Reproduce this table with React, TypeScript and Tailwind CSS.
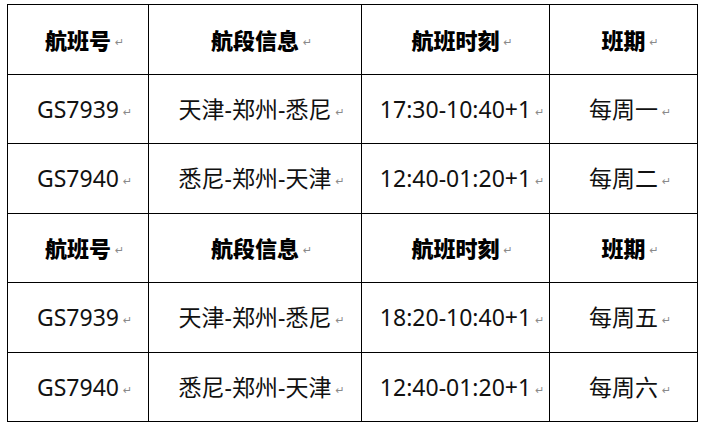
const HEAD = ['航班号', '航段信息', '航班时刻', '班期'];

const ROWS: string[][] = [
  ['GS7939', '天津-郑州-悉尼', '17:30-10:40+1', '每周一'],
  ['GS7940', '悉尼-郑州-天津', '12:40-01:20+1', '每周二'],
  HEAD,
  ['GS7939', '天津-郑州-悉尼', '18:20-10:40+1', '每周五'],
  ['GS7940', '悉尼-郑州-天津', '12:40-01:20+1', '每周六'],
];

const HEIGHTS = ['h-[70px]', 'h-[69px]', 'h-[70px]', 'h-[69px]', 'h-[70px]', 'h-[69px]'];

function Cell({ text, bold }: { text: string; bold?: boolean }) {
  return (
    <td className="border border-black p-0 text-center align-middle">
      <span
        className={
          'relative inline-block ' +
          (bold ? 'text-[22px] font-black text-black' : 'text-[23px] font-normal text-[#111]')
        }
      >
        {text}
        {/* Word paragraph mark, kept out of the centring like Word does */}
        <span className="absolute bottom-[3px] left-full ml-[4px] font-['DejaVu_Sans',sans-serif] text-[11px] font-normal text-[#8a8a8a]">
          ↵
        </span>
      </span>
    </td>
  );
}

export default function App() {
  const all = [HEAD, ...ROWS];
  return (
    <div className="h-[428px] w-[703px] bg-white pl-[7px] pt-[4px] font-['Noto_Sans','Noto_Sans_CJK_SC',sans-serif] leading-none">
      <table className="table-fixed border-collapse">
        <colgroup>
          <col className="w-[141px]" />
          <col className="w-[213px]" />
          <col className="w-[188px]" />
          <col className="w-[148px]" />
        </colgroup>
        <tbody>
          {all.map((row, i) => (
            <tr key={i} className={HEIGHTS[i]}>
              {row.map((t, j) => (
                <Cell key={j} text={t} bold={row === HEAD} />
              ))}
            </tr>
          ))}
        </tbody>
      </table>
    </div>
  );
}
